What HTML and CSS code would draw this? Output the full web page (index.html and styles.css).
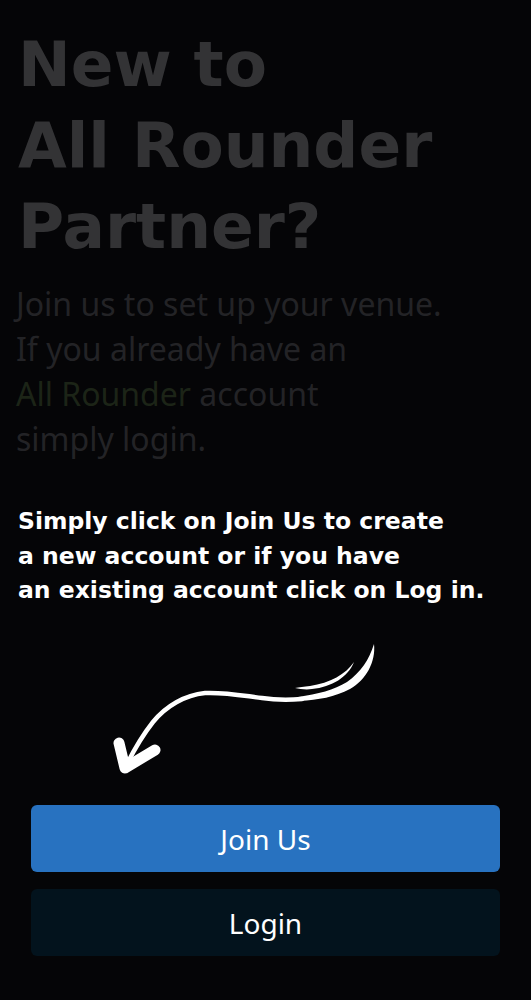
FILE: index.html
```html
<!DOCTYPE html>
<html lang="en">
<head>
<meta charset="utf-8">
<title>All Rounder Partner</title>
<link rel="stylesheet" href="styles.css">
</head>
<body>
<main class="screen">
  <section class="intro">
    <h1 class="title">New to<br>All Rounder<br>Partner?</h1>
    <p class="lead">Join us to set up your venue.<br>If you already have an<br><span class="brand">All Rounder</span> account<br>simply login.</p>
    <p class="hint">Simply click on Join Us to create<br>a new account or if you have<br>an existing account click on Log in.</p>
  </section>
  <svg class="arrow" viewBox="0 607 531 198" width="531" height="198" aria-hidden="true">
    <path d="M374,644 C376,662 366,680 350,689 C335,697 318,700 300,701 L298,697 C318,694 334,690 347,682 C361,672 369,660 374,644 Z" fill="#fff"/>
    <path d="M354,662 C346,674 330,683 310,686 C304,687 299,687 295,688 C300,689 306,690 312,689 C332,687 348,677 354,662 Z" fill="#fff"/>
    <path d="M302,699 C290,700 275,700 262,698 C245,696 225,692 205,693 C185,695 166,706 153,722 C142,736 134,750 127,764" fill="none" stroke="#fff" stroke-width="4.5" stroke-linecap="round"/>
    <path d="M119,743 L125,768 L155,750" fill="none" stroke="#fff" stroke-width="11" stroke-linecap="round" stroke-linejoin="round"/>
  </svg>
  <div class="actions">
    <button class="btn btn-primary" type="button">Join Us</button>
    <button class="btn btn-dark" type="button">Login</button>
  </div>
</main>
</body>
</html>
```

FILE: styles.css
```css
html, body {
  margin: 0;
  padding: 0;
  background: #050507;
}

.screen {
  width: 531px;
  height: 1000px;
  overflow: hidden;
  background: #050507;
}

.intro {
  padding: 24px 18px 0 18px;
  height: 607px;
  box-sizing: border-box;
}

.title {
  margin: 0;
  font-family: "DejaVu Sans", "Liberation Sans", sans-serif;
  font-weight: 700;
  font-size: 63px;
  line-height: 81px;
  color: #333335;
}

.lead {
  margin: 14px 0 0 -2px;
  font-family: "Noto Sans", "Open Sans", sans-serif;
  font-weight: 400;
  font-size: 32px;
  line-height: 45px;
  color: #232326;
}

.brand {
  color: #1c2417;
}

.hint {
  margin: 43px 0 0 0;
  font-family: "DejaVu Sans", "Liberation Sans", sans-serif;
  font-weight: 700;
  font-size: 23.5px;
  line-height: 34.5px;
  color: #ffffff;
}

.arrow {
  display: block;
}

.actions {
  display: flex;
  flex-direction: column;
  gap: 17px;
  padding: 0 31px;
}

.btn {
  display: block;
  width: 100%;
  height: 67px;
  border: 0;
  border-radius: 6px;
  font-family: "Noto Sans", "Open Sans", sans-serif;
  font-size: 28px;
  font-weight: 400;
  color: #ffffff;
  cursor: pointer;
}

.btn-primary {
  background: #2872c0;
}

.btn-dark {
  background: #03131d;
}
```
